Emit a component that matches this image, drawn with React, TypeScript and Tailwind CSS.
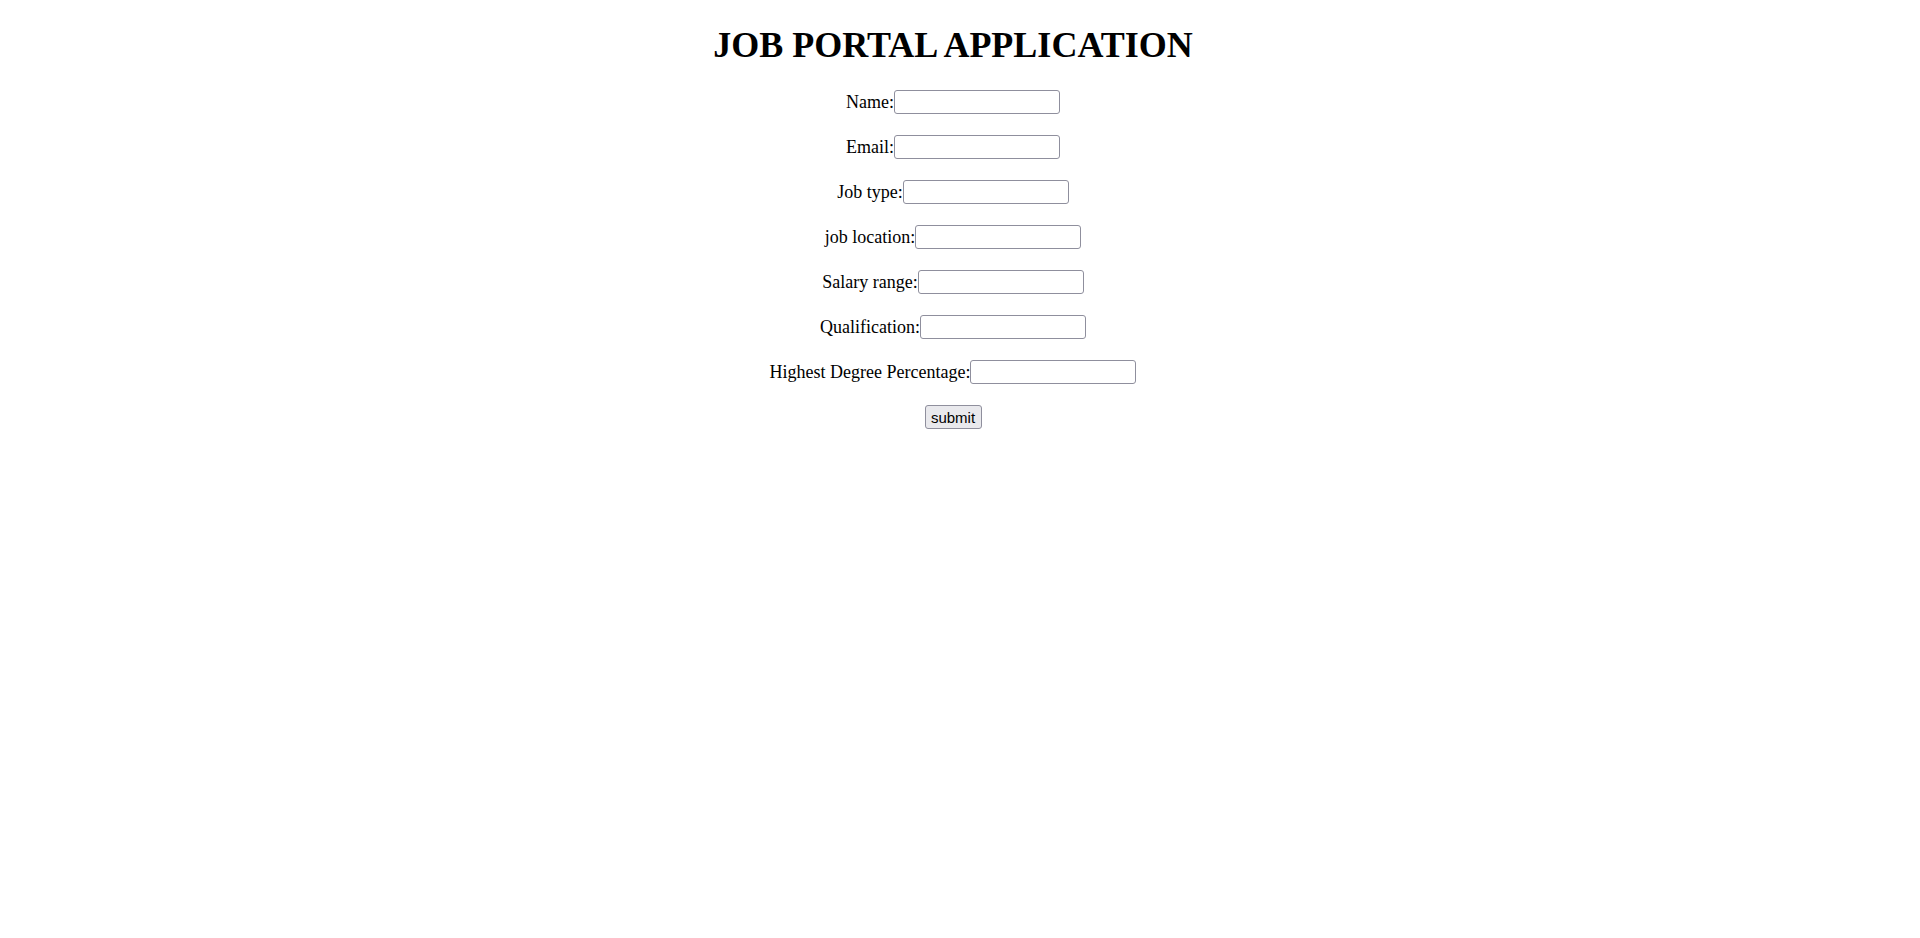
import React from 'react';

const fields = [
  'Name:',
  'Email:',
  'Job type:',
  'job location:',
  'Salary range:',
  'Qualification:',
  'Highest Degree Percentage:',
];

const App: React.FC = () => {
  return (
    <div className="min-h-[938px] bg-white pr-[14px] text-black font-['Liberation_Serif','Times_New_Roman',serif]">
      <h1 className="pt-[25px] text-center text-[36px] font-bold leading-[40px]">
        JOB PORTAL APPLICATION
      </h1>

      <form className="mt-[25px] flex flex-col items-center gap-[21px]">
        {fields.map((label) => (
          <div key={label} className="flex h-[24px] items-center text-[18px]">
            <label>{label}</label>
            <input
              type="text"
              className="h-[24px] w-[166px] rounded-[3px] border border-[#8f8f9d] bg-white px-[2px] text-[13px] outline-none"
            />
          </div>
        ))}
        <button
          type="button"
          className="h-[24px] w-[57px] rounded-[3px] border border-[#8f8f9d] bg-[#e9e9ed] text-[15px] font-['Liberation_Sans',Arial,sans-serif] leading-none text-black"
        >
          submit
        </button>
      </form>
    </div>
  );
};

export default App;
